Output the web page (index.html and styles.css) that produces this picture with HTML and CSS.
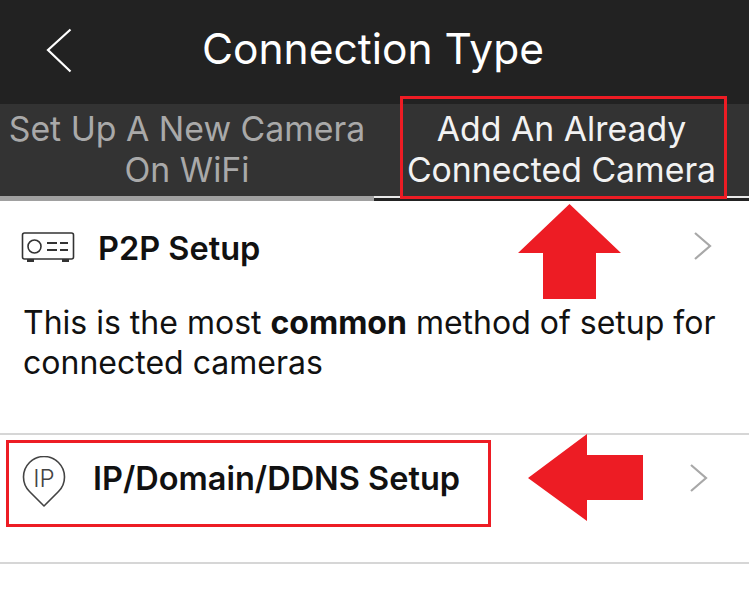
FILE: index.html
```html
<!DOCTYPE html>
<html lang="en">
<head>
<meta charset="utf-8">
<title>Connection Type</title>
<link rel="stylesheet" href="styles.css">
</head>
<body>
<div class="screen">
  <header class="nav">
    <svg class="back" width="30" height="46" viewBox="0 0 30 46"><path d="M28.5 2.5 L6 23 L28.5 44.5" fill="none" stroke="#fff" stroke-width="2.2"/></svg>
    <h1 class="title">Connection Type</h1>
  </header>
  <div class="tabs">
    <div class="tab tab-off">Set Up A New Camera<br>On WiFi</div>
    <div class="tab tab-on">Add An Already<br>Connected Camera</div>
  </div>
  <section class="row row-p2p">
    <div class="row-head">
      <svg class="ico-p2p" width="54" height="32" viewBox="0 0 54 32" fill="none" stroke="#333" stroke-width="1.6">
        <rect x="1.5" y="1" width="51" height="26" rx="2"/>
        <circle cx="13.5" cy="14.5" r="6.5"/>
        <path d="M26 11H36M39 11H47M26 18H36M39 18H47" stroke-width="2"/>
        <path d="M6 28.5H13M41 28.5H48" stroke-width="3"/>
      </svg>
      <span class="row-title">P2P Setup</span>
      <svg class="chev chev-p2p" width="20" height="28" viewBox="0 0 20 28"><path d="M2 1 L17 14 L2 27" fill="none" stroke="#a8a8a8" stroke-width="2.2"/></svg>
    </div>
    <p class="desc"><span class="desc-line">This is the most <b>common</b> method of setup for</span><span class="desc-line">connected cameras</span></p>
  </section>
  <section class="row row-ip">
    <div class="row-head">
      <svg class="ico-ip" width="46" height="52" viewBox="0 0 46 52" fill="none">
        <path d="M23 50 L8.5 35.5 A20.5 20.5 0 1 1 37.5 35.5 Z" stroke="#444" stroke-width="1.6" stroke-linejoin="round"/>
      </svg>
      <span class="ip-label">IP</span>
      <span class="row-title">IP/Domain/DDNS Setup</span>
      <svg class="chev chev-ip" width="20" height="28" viewBox="0 0 20 28"><path d="M2 1 L17 14 L2 27" fill="none" stroke="#a8a8a8" stroke-width="2.2"/></svg>
    </div>
  </section>

  <div class="mark mark-tab"></div>
  <div class="mark mark-ip"></div>
  <svg class="arrow arrow-up" width="104" height="96" viewBox="0 0 104 96"><path d="M51.5 0 L103 49 H78 V95 H25 V49 H0 Z" fill="#ed1c24"/></svg>
  <svg class="arrow arrow-left" width="116" height="88" viewBox="0 0 116 88"><path d="M0 44 L59 0 V21 H115 V66 H59 V87 Z" fill="#ed1c24"/></svg>
</div>
</body>
</html>
```
FILE: styles.css
```css
* { box-sizing: border-box; }
html, body { margin: 0; padding: 0; background: #fff; }
.screen {
  position: relative;
  width: 749px;
  height: 591px;
  overflow: hidden;
  font-family: Inter, "Liberation Sans", sans-serif;
  color: #111;
}
.nav {
  height: 104px;
  background: #222;
  display: flex;
  align-items: center;
  justify-content: center;
  position: relative;
  padding-bottom: 7px;
}
.back { position: absolute; left: 42px; top: 27px; }
.title {
  margin: 0 0 0 -3px;
  font-size: 42.5px;
  font-weight: 400;
  color: #fff;
}
.tabs {
  height: 97px;
  display: flex;
  background: #333;
}
.tab {
  height: 97px;
  padding-top: 4px;
  text-align: center;
  font-size: 33.8px;
  line-height: 41px;
  white-space: nowrap;
}
.tab-off {
  width: 374px;
  color: #a9a9a9;
  border-bottom: 5px solid #a0a0a0;
}
.tab-on {
  flex: 1;
  color: #f2f2f2;
  border-bottom: 3px solid #222;
  box-shadow: inset 0 -2px 0 #e8e8e8;
}
.row { border-bottom: 2px solid #d6d6d6; }
.row-p2p { height: 234px; padding-top: 19px; }
.row-ip { height: 129px; padding-top: 15px; }
.row-head {
  display: flex;
  align-items: center;
  position: relative;
  padding-left: 21px;
  height: 56px;
}
.ico-p2p { flex: none; width: 54px; height: 32px; margin-right: 23px; }
.ico-ip { flex: none; align-self: flex-start; margin: 6px 26px 0 0; }
.ip-label {
  position: absolute;
  left: 21px;
  width: 46px;
  top: 14px;
  text-align: center;
  font-size: 24px;
  line-height: 30px;
  font-weight: 300;
  color: #444;
}
.row-title {
  font-size: 32.5px;
  font-weight: 600;
  color: #111;
  white-space: nowrap;
}
.chev { position: absolute; top: 12px; }
.chev-p2p { left: 693px; top: 12px; }
.chev-ip { left: 689px; top: 14px; }
.desc {
  margin: 27px 0 0 23px;
  font-size: 32px;
  line-height: 40px;
  color: #111;
}
.desc-line { display: block; white-space: nowrap; }
.desc b { font-weight: 700; }
.mark { position: absolute; border: 3px solid #ed1c24; }
.mark-tab { left: 400px; top: 96px; width: 327px; height: 103px; }
.mark-ip { left: 6px; top: 440px; width: 485px; height: 87px; }
.arrow { position: absolute; display: block; }
.arrow-up { left: 518px; top: 204px; }
.arrow-left { left: 528px; top: 434px; }
```
